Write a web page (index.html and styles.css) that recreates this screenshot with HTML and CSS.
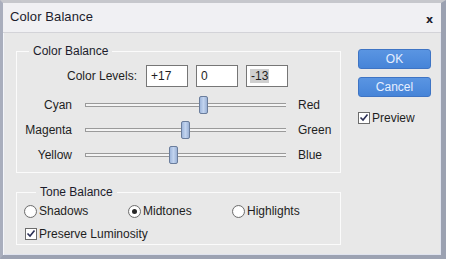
FILE: index.html
```html
<!DOCTYPE html>
<html>
<head>
<meta charset="utf-8">
<link rel="stylesheet" href="styles.css">
</head>
<body>
<div class="window">
  <div class="titlebar">
    <span class="title">Color Balance</span>
    <span class="close">x</span>
  </div>
  <div class="content">
    <div class="main">
      <fieldset class="group group-color">
        <legend>Color Balance</legend>
        <div class="levels">
          <span class="levels-label">Color Levels:</span>
          <span class="field">+17</span>
          <span class="field">0</span>
          <span class="field"><span class="sel">-13</span></span>
        </div>
        <div class="sliders">
          <span class="s-left">Cyan</span>
          <div class="track"><span class="thumb" style="left:113px"></span></div>
          <span class="s-right">Red</span>
          <span class="s-left">Magenta</span>
          <div class="track"><span class="thumb" style="left:95px"></span></div>
          <span class="s-right">Green</span>
          <span class="s-left">Yellow</span>
          <div class="track"><span class="thumb" style="left:83px"></span></div>
          <span class="s-right">Blue</span>
        </div>
      </fieldset>
      <fieldset class="group group-tone">
        <legend>Tone Balance</legend>
        <div class="radios">
          <span class="opt"><span class="radio"></span>Shadows</span>
          <span class="opt"><span class="radio on"></span>Midtones</span>
          <span class="opt"><span class="radio"></span>Highlights</span>
        </div>
        <div class="opt check-row"><span class="box"><svg width="10" height="10" viewBox="0 0 10 10"><path d="M1.5 4.5 L4 7 L8.5 1.5" fill="none" stroke="#2b2f55" stroke-width="1.6"/></svg></span>Preserve Luminosity</div>
      </fieldset>
    </div>
    <div class="side">
      <span class="btn">OK</span>
      <span class="btn">Cancel</span>
      <div class="opt preview"><span class="box"><svg width="10" height="10" viewBox="0 0 10 10"><path d="M1.5 4.5 L4 7 L8.5 1.5" fill="none" stroke="#2b2f55" stroke-width="1.6"/></svg></span>Preview</div>
    </div>
  </div>
</div>
</body>
</html>
```

FILE: styles.css
```css
* { box-sizing: border-box; }
html, body { margin: 0; padding: 0; background: #ffffff; }
body {
  font-family: "Liberation Sans", Arial, sans-serif;
  font-size: 12px;
  color: #1e1e1e;
}
.window {
  width: 446px;
  height: 259px;
  background: #e8e8e8;
  border-left: 3px solid #a9aebd;
  border-top: 3px solid #c6c7cc;
  border-right: 5px solid #9ba1b1;
  border-bottom: 4px solid #9ca2b2;
  box-shadow: inset 1px 0 0 #f4f6fb, inset -1px -1px 0 #dfe3ee;
  display: flex;
  flex-direction: column;
}
.titlebar {
  height: 30px;
  flex: none;
  background: #f0f0f3;
  border-bottom: 1px solid #d3d3d8;
  display: flex;
  align-items: center;
  justify-content: space-between;
  padding: 0 8px 0 7px;
}
.title {
  font-size: 13px;
  color: #1c1c2c;
  letter-spacing: 0.1px;
  margin-top: -2px;
}
.close {
  font-family: "DejaVu Sans", sans-serif;
  font-weight: bold;
  font-size: 11px;
  color: #1c1c2c;
  margin-top: 3px;
}
.content {
  display: flex;
  padding: 11px 0 0 13px;
  gap: 17px;
}
.main { width: 325px; flex: none; }
.group {
  margin: 0;
  width: 325px;
  border: 1px solid #fbfbfb;
  padding: 0;
}
.group legend {
  margin-left: 12px;
  padding: 0 4px;
  line-height: 14px;
  font-size: 12px;
  color: #1c1c2c;
}
.group-color { padding: 7px 0 5px 0; }
.levels {
  display: flex;
  align-items: center;
  gap: 8px;
}
.levels-label {
  width: 120px;
  text-align: right;
  margin-right: 1px;
}
.field {
  width: 42px;
  height: 22px;
  background: #ffffff;
  border: 1px solid #767676;
  display: flex;
  align-items: center;
  padding-left: 4px;
}
.sel { background: #cfcfcf; padding: 0 1px; margin-left: -1px; }
.sliders {
  margin-top: 5px;
  display: grid;
  grid-template-columns: 55px 201px auto;
  grid-auto-rows: 25px;
  column-gap: 13px;
  align-items: center;
}
.sliders .s-right { margin-left: -1px; }
.s-left { text-align: right; }
.track {
  position: relative;
  height: 4px;
  border-top: 1px solid #9a9a9a;
  border-bottom: 1px solid #9a9a9a;
  border-left: 1px solid #9a9a9a;
  background: #f4f4f4;
}
.thumb {
  position: absolute;
  top: -8px;
  width: 9px;
  height: 18px;
  border: 1px solid #6a7d9c;
  border-radius: 2px;
  background: linear-gradient(to right, #9fb7dc, #c2d4ef 50%, #9bb2d6);
}
.group-tone {
  margin-top: 12px;
  padding: 4px 0 2px 7px;
}
.radios {
  display: grid;
  grid-template-columns: 104px 104px 104px;
  height: 16px;
  align-items: center;
}
.opt { display: flex; align-items: center; }
.radio {
  width: 13px;
  height: 13px;
  border-radius: 50%;
  border: 1px solid #6e6e6e;
  background: radial-gradient(circle, #ffffff 50%, #ececec);
  margin-right: 2px;
  display: flex;
  align-items: center;
  justify-content: center;
}
.radio.on::after {
  content: "";
  width: 5px;
  height: 5px;
  border-radius: 50%;
  background: #262626;
}
.check-row { margin-top: 7px; height: 16px; padding-left: 1px; }
.box {
  width: 12px;
  height: 12px;
  border: 1px solid #6c6c6c;
  background: #ffffff;
  margin-right: 2px;
  display: flex;
  align-items: center;
  justify-content: center;
}
.side {
  display: flex;
  flex-direction: column;
  padding-top: 5px;
  width: 73px;
}
.btn {
  width: 73px;
  height: 20px;
  border-radius: 3px;
  background: linear-gradient(#5a95e2, #4684d8);
  border: 1px solid #3e74c4;
  color: #e6efff;
  text-align: center;
  line-height: 18px;
  font-size: 12px;
}
.btn + .btn { margin-top: 8px; }
.preview { margin-top: 14px; }
```
